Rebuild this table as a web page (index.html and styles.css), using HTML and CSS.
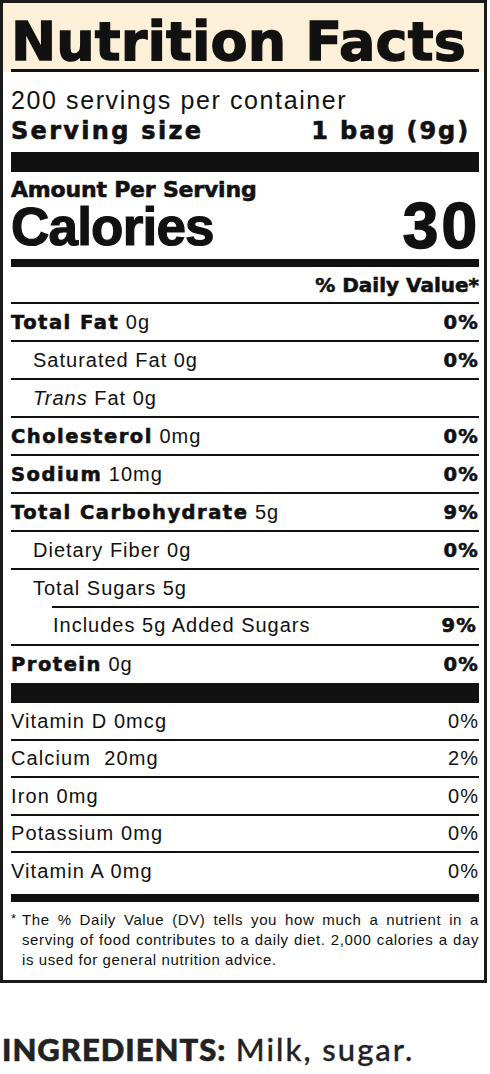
FILE: index.html
```html
<!DOCTYPE html>
<html lang="en">
<head>
<meta charset="utf-8">
<title>Nutrition Facts</title>
<link rel="stylesheet" href="styles.css">
</head>
<body>
<main class="page">
  <section class="label">
    <header class="label-head">
      <h1 class="title">Nutrition Facts</h1>
    </header>
    <div class="inner">
      <p class="servings">200 servings per container</p>
      <div class="serving-size"><span class="heavy ss">Serving size</span><span class="heavy ss ss-val">1 bag (9g)</span></div>
      <div class="bar bar-thick"></div>
      <p class="heavy amount">Amount Per Serving</p>
      <div class="calories"><span class="cal-label">Calories</span><span class="cal-val">30</span></div>
      <div class="bar bar-mid"></div>
      <div class="heavy dv-head">% Daily Value*</div>

      <div class="row"><span><b class="heavy">Total Fat</b> 0g</span><span class="heavy pct">0%</span></div>
      <div class="row"><span class="sub">Saturated Fat 0g</span><span class="heavy pct">0%</span></div>
      <div class="row"><span class="sub"><i>Trans</i> Fat 0g</span></div>
      <div class="row"><span><b class="heavy">Cholesterol</b> 0mg</span><span class="heavy pct">0%</span></div>
      <div class="row"><span><b class="heavy">Sodium</b> 10mg</span><span class="heavy pct">0%</span></div>
      <div class="row"><span><b class="heavy">Total Carbohydrate</b> 5g</span><span class="heavy pct">9%</span></div>
      <div class="row"><span class="sub">Dietary Fiber 0g</span><span class="heavy pct">0%</span></div>
      <div class="row row-open"><span class="sub">Total Sugars 5g</span></div>
      <div class="row-added">
        <div class="added-inner"><span>Includes 5g Added Sugars</span><span class="heavy pct">9%</span></div>
      </div>
      <div class="row row-protein"><span><b class="heavy">Protein</b> 0g</span><span class="heavy pct">0%</span></div>

      <div class="bar bar-thick"></div>

      <div class="row vit"><span>Vitamin D 0mcg</span><span class="pct-reg">0%</span></div>
      <div class="row vit"><span>Calcium&nbsp; 20mg</span><span class="pct-reg">2%</span></div>
      <div class="row vit"><span>Iron 0mg</span><span class="pct-reg">0%</span></div>
      <div class="row vit"><span>Potassium 0mg</span><span class="pct-reg">0%</span></div>
      <div class="row vit vit-last"><span>Vitamin A 0mg</span><span class="pct-reg">0%</span></div>

      <div class="bar bar-mid"></div>

      <div class="foot">
        <span class="star">*</span>
        <p class="foot-text">The % Daily Value (DV) tells you how much a nutrient in a serving of food contributes to a daily diet. 2,000 calories a day is used for general nutrition advice.</p>
      </div>
    </div>
  </section>

  <p class="ingredients"><strong class="ing-label">INGREDIENTS:</strong> <span class="ing-list">Milk, sugar.</span></p>
</main>
</body>
</html>
```
FILE: styles.css
```css
* { box-sizing: border-box; }

html, body {
  margin: 0;
  padding: 0;
  background: #ffffff;
}

.page {
  width: 490px;
  color: #111111;
  font-family: "Liberation Sans", Arial, sans-serif;
}

.label {
  width: 487px;
  border: 3px solid #1b1b1b;
}

.label-head {
  background: #fdf0d9;
  padding: 0 5px 0 8px;
}

.title {
  margin: 0;
  padding-top: 11px;
  height: 69px;
  line-height: 55px;
  border-bottom: 3px solid #111111;
  font-family: "DejaVu Sans", sans-serif;
  font-weight: 700;
  font-size: 54px;
  letter-spacing: 0.1px;
  -webkit-text-stroke: 1.3px #111111;
  white-space: nowrap;
}

.inner {
  padding: 0 5px 0 8px;
}

.heavy {
  font-family: "DejaVu Sans", sans-serif;
  font-weight: 700;
  -webkit-text-stroke: 0.6px #111111;
}

.servings {
  margin: 0;
  padding-top: 13px;
  font-size: 25px;
  line-height: 30px;
  letter-spacing: 1.6px;
}

.serving-size {
  display: flex;
  justify-content: space-between;
  height: 30px;
  margin-top: 1px;
  line-height: 30px;
}

.ss {
  font-size: 24px;
  letter-spacing: 2.3px;
}

.ss-val {
  margin-right: 9px;
  letter-spacing: 1.9px;
}

.bar {
  background: #111111;
}

.bar-thick {
  height: 20px;
}

.serving-size + .bar-thick {
  margin-top: 6px;
}

.bar-mid {
  height: 8px;
}

.amount {
  margin: 7px 0 0;
  font-size: 22px;
  line-height: 22px;
  padding-bottom: 2px;
  letter-spacing: -0.2px;
}

.calories {
  display: flex;
  justify-content: space-between;
  align-items: flex-end;
  height: 56px;
}

.cal-label {
  font-weight: 700;
  font-size: 53px;
  line-height: 44px;
  padding-bottom: 10px;
  letter-spacing: -0.8px;
  -webkit-text-stroke: 1.2px #111111;
}

.cal-val {
  font-weight: 700;
  font-size: 64px;
  line-height: 48px;
  padding-bottom: 9px;
  letter-spacing: 3px;
  margin-right: -1px;
  -webkit-text-stroke: 1.6px #111111;
}

.dv-head {
  height: 37px;
  padding-top: 2px;
  line-height: 33px;
  font-size: 20px;
  letter-spacing: 0;
  text-align: right;
  border-bottom: 2px solid #111111;
}

.row {
  display: flex;
  justify-content: space-between;
  align-items: baseline;
  height: 38px;
  padding-top: 2px;
  line-height: 33px;
  font-size: 20px;
  letter-spacing: 1px;
  border-bottom: 2px solid #111111;
  white-space: nowrap;
}

.row .heavy {
  font-size: 19.5px;
  letter-spacing: 1.5px;
}

.row b {
  font-weight: 700;
}

.sub {
  padding-left: 22px;
}

.row-open {
  height: 36px;
  border-bottom: 0;
}

.row-added {
  height: 40px;
  border-bottom: 2px solid #111111;
}

.added-inner {
  display: flex;
  justify-content: space-between;
  align-items: baseline;
  margin-left: 41px;
  padding: 1px 2px 0 1px;
  border-top: 2px solid #111111;
  line-height: 33px;
  font-size: 20px;
  letter-spacing: 1px;
  white-space: nowrap;
}

.added-inner .heavy {
  font-size: 19.5px;
  letter-spacing: 1.2px;
}

.row .pct {
  letter-spacing: 1.2px;
}

.row-protein {
  height: 37px;
  border-bottom: 0;
}

.vit {
  height: 37.5px;
  padding-top: 1.5px;
  letter-spacing: 1.1px;
}

.vit-last {
  height: 41px;
  border-bottom: 0;
}

.pct-reg {
  letter-spacing: 1px;
}

.foot {
  display: flex;
  padding: 8px 0 9.5px;
  font-size: 15px;
  line-height: 20px;
}

.star {
  flex: none;
  width: 11px;
  font-size: 13px;
  line-height: 18px;
}

.foot-text {
  margin: 0;
  flex: 1;
  text-align: justify;
  letter-spacing: 0.6px;
}

.ingredients {
  margin: 48px 0 0 2px;
  font-family: Lato, "Noto Sans", sans-serif;
  font-size: 31px;
  line-height: 36px;
  letter-spacing: 1.5px;
  color: #222222;
  white-space: nowrap;
}

.ing-label {
  font-weight: 900;
  letter-spacing: 1px;
  -webkit-text-stroke: 0.6px #222222;
}

.ing-list {
  font-weight: 500;
  letter-spacing: 2px;
  -webkit-text-stroke: 0.3px #222222;
}
```
